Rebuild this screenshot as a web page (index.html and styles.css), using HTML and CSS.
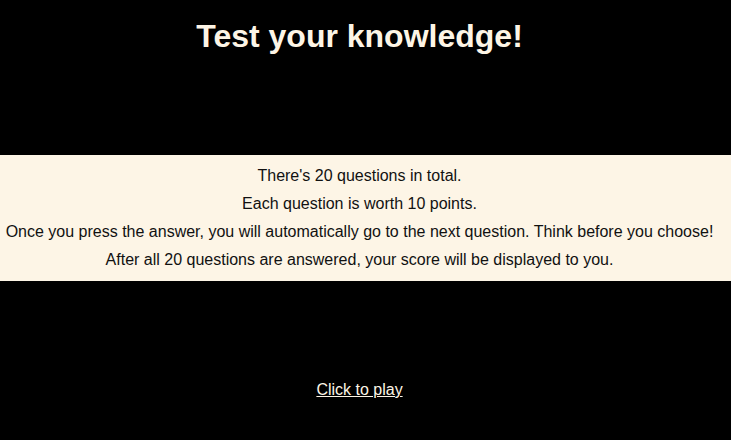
FILE: index.html
```html
<!DOCTYPE html>
<html>
<head>
<meta charset="utf-8">
<link rel="stylesheet" href="styles.css">
</head>
<body>
<h1 class="title">Test your knowledge!</h1>
<section class="rules">
  <p>There's 20 questions in total.</p>
  <p>Each question is worth 10 points.</p>
  <p>Once you press the answer, you will automatically go to the next question. Think before you choose!</p>
  <p>After all 20 questions are answered, your score will be displayed to you.</p>
</section>
<div class="play"><a href="#" class="play-link">Click to play</a></div>
</body>
</html>
```
FILE: styles.css
```css
html, body {
  margin: 0;
  padding: 0;
  background: #000;
  font-family: "Liberation Sans", Arial, sans-serif;
  height: 100%;
}
.title {
  margin: 0;
  padding: 18px 12px 0 0;
  height: 155px;
  box-sizing: border-box;
  text-align: center;
  font-size: 32px;
  font-weight: bold;
  line-height: 37px;
  color: #fdf5e6;
}
.rules {
  background: #fdf5e6;
  padding: 7px 12px 7px 0;
  text-align: center;
  color: #111;
  font-size: 16px;
}
.rules p {
  margin: 0;
  line-height: 28px;
}
.play {
  text-align: center;
  padding: 100px 12px 0 0;
  font-size: 16px;
  line-height: 18px;
}
.play-link {
  color: #fdf5e6;
}
```
